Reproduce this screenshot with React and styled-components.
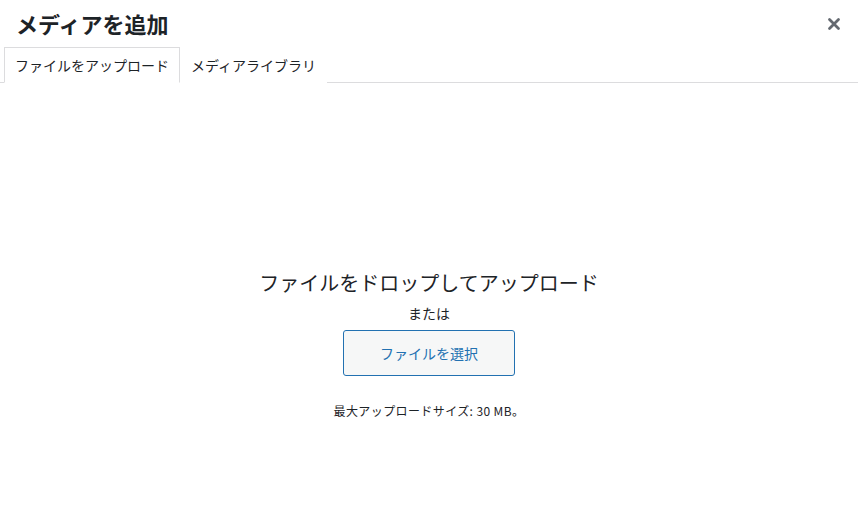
import React from 'react'
import styled, { createGlobalStyle } from 'styled-components'

const GlobalStyle = createGlobalStyle`
  html, body {
    margin: 0;
    padding: 0;
    background: #fff;
  }
  body {
    font-family: "Noto Sans CJK JP", "Noto Sans", "Liberation Sans", sans-serif;
    color: #1d2327;
  }
`

const Frame = styled.div`
  width: 858px;
  height: 507px;
  display: flex;
  flex-direction: column;
  background: #fff;
  overflow: hidden;
`

const TitleBar = styled.div`
  height: 47px;
  display: flex;
  align-items: center;
  justify-content: space-between;
  padding: 0 16px;
`

const Title = styled.h1`
  margin: 0;
  font-size: 22px;
  font-weight: 600;
  line-height: 47px;
  color: #1d2327;
`

const CloseButton = styled.button`
  width: 24px;
  height: 24px;
  margin-right: -4px;
  padding: 0;
  border: 0;
  background: none;
  display: flex;
  align-items: center;
  justify-content: center;
  color: #646970;
  cursor: pointer;
`

const Tabs = styled.div`
  display: flex;
  padding: 0 4px;
  border-bottom: 1px solid #dcdcde;
  height: 35px;
`

const Tab = styled.button`
  margin: 0 0 -1px;
  padding: 0 10px;
  height: 36px;
  border: 1px solid ${p => (p.$active ? '#dcdcde' : 'transparent')};
  border-bottom-color: ${p => (p.$active ? '#fff' : 'transparent')};
  background: #fff;
  font-family: inherit;
  font-size: 14px;
  line-height: 18px;
  color: #1d2327;
  cursor: pointer;
`

const Uploader = styled.div`
  flex: 1;
  display: flex;
  flex-direction: column;
  align-items: center;
  padding-top: 186px;
`

const DropText = styled.p`
  margin: 0;
  font-size: 20px;
  line-height: 28px;
  color: #1d2327;
`

const OrText = styled.p`
  margin: 6px 0 0;
  font-size: 14px;
  line-height: 20px;
`

const SelectButton = styled.button`
  margin-top: 7px;
  width: 172px;
  height: 46px;
  border: 1px solid #2271b1;
  border-radius: 3px;
  background: #f6f7f7;
  color: #2271b1;
  font-family: inherit;
  font-size: 14px;
  cursor: pointer;
`

const MaxSize = styled.p`
  margin: 26px 0 0;
  font-size: 12px;
  line-height: 18px;
  letter-spacing: 0.4px;
  color: #1d2327;
`

const CloseIcon = () => (
  <svg width="14" height="14" viewBox="0 0 14 14">
    <path d="M2.5 2.5 L11.5 11.5 M11.5 2.5 L2.5 11.5" stroke="currentColor" strokeWidth="2.8" strokeLinecap="round" />
  </svg>
)

export default function App () {
  return (
    <Frame>
      <GlobalStyle />
      <TitleBar>
        <Title>メディアを追加</Title>
        <CloseButton aria-label="閉じる">
          <CloseIcon />
        </CloseButton>
      </TitleBar>
      <Tabs>
        <Tab $active>ファイルをアップロード</Tab>
        <Tab>メディアライブラリ</Tab>
      </Tabs>
      <Uploader>
        <DropText>ファイルをドロップしてアップロード</DropText>
        <OrText>または</OrText>
        <SelectButton>ファイルを選択</SelectButton>
        <MaxSize>最大アップロードサイズ: 30 MB。</MaxSize>
      </Uploader>
    </Frame>
  )
}
